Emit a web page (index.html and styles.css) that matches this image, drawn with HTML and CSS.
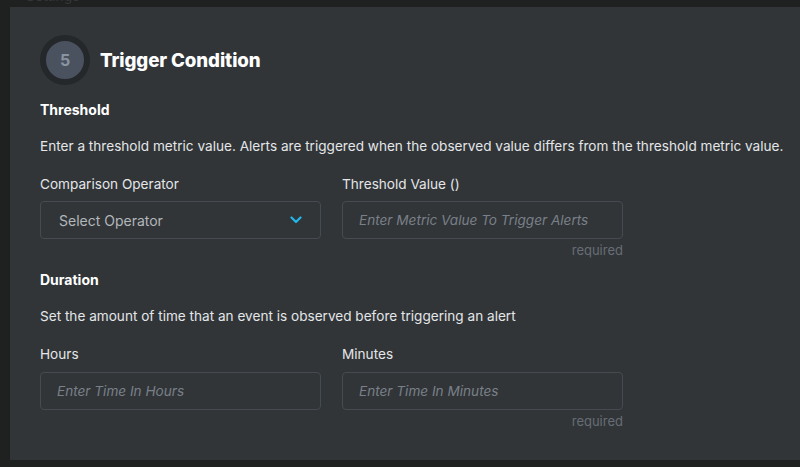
FILE: index.html
```html
<!DOCTYPE html>
<html>
<head>
<meta charset="utf-8">
<link rel="stylesheet" href="styles.css">
</head>
<body>
<div class="topbar"><span class="crumb">Settings</span></div>
<div class="panel">
  <div class="header">
    <div class="step"><span>5</span></div>
    <h2 class="title">Trigger Condition</h2>
  </div>

  <h3 class="section">Threshold</h3>
  <p class="desc">Enter a threshold metric value. Alerts are triggered when the observed value differs from the threshold metric value.</p>
  <div class="row">
    <div class="field">
      <label class="label">Comparison Operator</label>
      <div class="select">
        <span>Select Operator</span>
        <svg class="chev" width="12" height="8" viewBox="0 0 12 8"><path d="M1.5 1.5 L6 6 L10.5 1.5" fill="none" stroke="#22b5e8" stroke-width="2.2" stroke-linecap="round" stroke-linejoin="round"/></svg>
      </div>
    </div>
    <div class="field">
      <label class="label">Threshold Value ()</label>
      <div class="input"><span>Enter Metric Value To Trigger Alerts</span></div>
      <div class="req">required</div>
    </div>
  </div>

  <h3 class="section dur">Duration</h3>
  <p class="desc">Set the amount of time that an event is observed before triggering an alert</p>
  <div class="row row2">
    <div class="field">
      <label class="label">Hours</label>
      <div class="input"><span>Enter Time In Hours</span></div>
    </div>
    <div class="field">
      <label class="label">Minutes</label>
      <div class="input"><span>Enter Time In Minutes</span></div>
      <div class="req">required</div>
    </div>
  </div>
</div>
</body>
</html>
```

FILE: styles.css
```css
html, body {
  margin: 0;
  padding: 0;
  background: #1f2120;
  width: 800px;
  height: 467px;
  overflow: hidden;
  font-family: Inter, "Noto Sans", sans-serif;
}
.topbar {
  height: 7px;
  overflow: hidden;
  position: relative;
}
.crumb {
  position: absolute;
  left: 26px;
  top: -13px;
  font-size: 14px;
  color: #333636;
}
.panel {
  margin-left: 10px;
  width: 810px;
  height: 453px;
  background: #313538;
  box-sizing: border-box;
  padding: 28px 0 0 30px;
}
.header {
  display: flex;
  align-items: center;
  gap: 10px;
}
.step {
  width: 38px;
  height: 38px;
  border-radius: 50%;
  background: #4a5260;
  border: 6px solid #25282a;
  display: flex;
  align-items: center;
  justify-content: center;
}
.step span {
  color: #8a93a0;
  font-weight: 700;
  font-size: 16px;
}
.title {
  margin: 0;
  color: #ffffff;
  font-size: 18.7px;
  font-weight: 800;
  letter-spacing: -0.1px;
}
.section {
  margin: 16px 0 0 0;
  color: #ffffff;
  font-size: 14px;
  font-weight: 700;
  line-height: 18px;
}
.section.dur {
  margin-top: 13px;
}
.desc {
  margin: 18px 0 0 0;
  color: #e4e6e8;
  font-size: 13.6px;
  line-height: 18px;
}
.row {
  display: flex;
  gap: 21px;
  margin-top: 20px;
}
.field {
  width: 281px;
  display: flex;
  flex-direction: column;
}
.label {
  color: #e4e6e8;
  font-size: 13.6px;
  line-height: 18px;
}
.select, .input {
  margin-top: 8px;
  height: 38px;
  box-sizing: border-box;
  border: 1px solid #464b52;
  border-radius: 4px;
  display: flex;
  align-items: center;
  font-size: 14px;
}
.row2 .input {
  margin-top: 9px;
}
.select {
  padding: 0 18px 0 18px;
  justify-content: space-between;
  color: #b3b7bb;
}
.input {
  padding-left: 16px;
  color: #7a8089;
  font-style: italic;
  font-size: 13.6px;
}
.req {
  align-self: flex-end;
  margin-top: 3px;
  font-size: 13px;
  color: #676d74;
  line-height: 16px;
}
```
